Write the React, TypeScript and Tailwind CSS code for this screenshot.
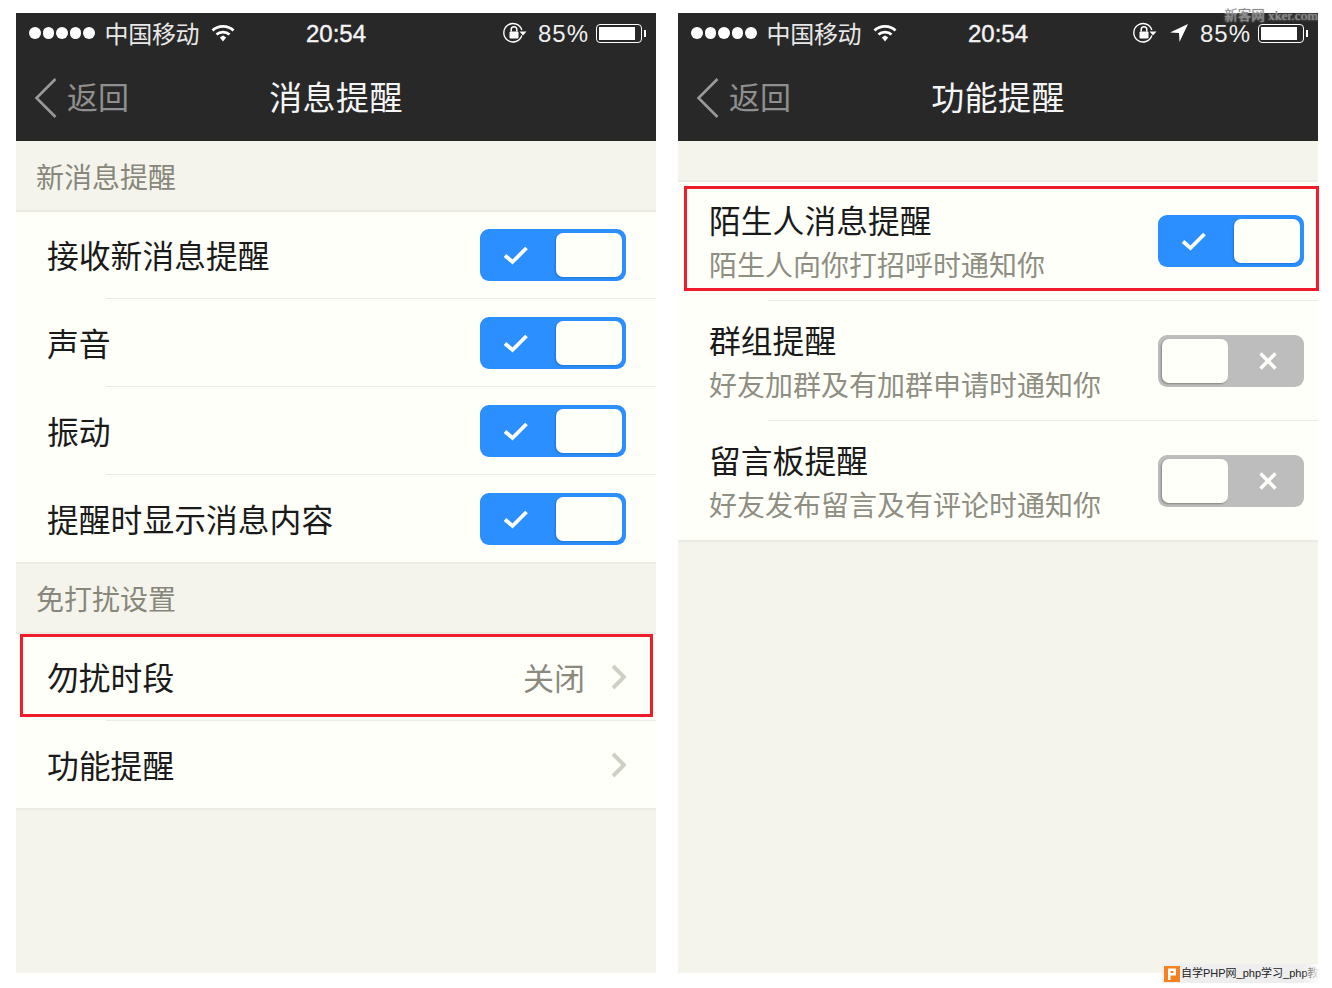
import { ReactNode } from 'react';

const cjk = "font-['Liberation_Sans','Noto_Sans_CJK_SC',sans-serif]";

function Toggle({ on }: { on: boolean }) {
  if (on) {
    return (
      <div className="flex h-[52px] w-[146px] shrink-0 items-center justify-end rounded-[9px] bg-[#2b8fff] pr-1">
        <div className="relative h-[44px] w-[66px] rounded-[7px] bg-[#fffffa] shadow-[-1px_1px_2px_rgba(0,40,100,0.25)]">
          <svg className="absolute left-[-53px] top-[11px]" width="26" height="22" viewBox="0 0 26 22" fill="none">
            <path d="M2 11.5 L9.5 18 L23.5 4" stroke="#fffffa" strokeWidth="3.8" />
          </svg>
        </div>
      </div>
    );
  }
  return (
    <div className="flex h-[52px] w-[146px] shrink-0 items-center rounded-[9px] bg-[#bdbdbd] pl-1">
      <div className="relative h-[44px] w-[66px] rounded-[7px] bg-[#fffffa] shadow-[-1px_1px_2px_rgba(0,0,0,0.3)]">
        <svg className="absolute left-[97px] top-[13px]" width="18" height="18" viewBox="0 0 18 18" fill="none">
          <path d="M1.5 1.5 L16.5 16.5 M16.5 1.5 L1.5 16.5" stroke="#fffffa" strokeWidth="3.4" />
        </svg>
      </div>
    </div>
  );
}

function Chevron() {
  return (
    <svg width="16" height="26" viewBox="0 0 16 26" fill="none">
      <path d="M3 2 L14 13 L3 24" stroke="#cfcfc6" strokeWidth="4" />
    </svg>
  );
}

function Wifi() {
  return (
    <svg width="24" height="20" viewBox="0 0 24 20" fill="none">
      <path d="M1.5 7.5 C7 2 17 2 22.5 7.5" stroke="#fff" strokeWidth="2.8" />
      <path d="M5.5 11.5 C9 8.2 15 8.2 18.5 11.5" stroke="#fff" strokeWidth="2.8" />
      <path d="M8.8 14.6 L12 12.6 L15.2 14.6 L12 18.6 Z" fill="#fff" />
    </svg>
  );
}

function RotationLock() {
  return (
    <svg width="24" height="22" viewBox="0 0 24 22" fill="none">
      <path d="M18.8 13.5 A9.2 9.2 0 1 1 18.8 8" stroke="#fff" strokeWidth="1.4" />
      <path d="M16.5 9.5 H23.5 L20 13.5 Z" fill="#fff" />
      <rect x="6.5" y="9.5" width="9" height="7" rx="1" fill="#fff" />
      <path d="M8.2 9.5 V7.5 A2.8 2.8 0 0 1 13.8 7.5 V9.5" stroke="#fff" strokeWidth="1.5" />
    </svg>
  );
}

function Battery() {
  return (
    <div className="flex items-center">
      <div className="h-[19px] w-[46px] rounded-[4px] border border-white p-[2px]">
        <div className="h-full w-[36px] bg-white" />
      </div>
      <div className="ml-[2px] h-[7px] w-[2px] bg-white" />
    </div>
  );
}

function Header({ title, locate }: { title: string; locate?: boolean }) {
  return (
    <div className="bg-[#282828] text-white">
      <div className="relative flex h-[40px] items-center pl-[13px] pr-[10px]">
        <div className="flex gap-[2px]">
          {[0, 1, 2, 3, 4].map((i) => (
            <div key={i} className="size-[11.5px] rounded-full bg-white" />
          ))}
        </div>
        <span className="ml-[10px] pt-[4px] text-[24px] leading-none tracking-[-0.3px] text-[#e8e8e8]">中国移动</span>
        <div className="ml-[12px]">
          <Wifi />
        </div>
        <span className="absolute left-[290px] top-[9px] text-[24px] leading-none text-[#f4f4f4] [-webkit-text-stroke:0.4px_#f4f4f4]">20:54</span>
        <div className="ml-auto flex items-center">
          <RotationLock />
          {locate && (
            <svg className="ml-[12px]" width="20" height="20" viewBox="0 0 20 20">
              <path d="M19 1 L1 9.5 L10 10 L10.5 19 Z" fill="#fff" />
            </svg>
          )}
          <span className="ml-[11px] pt-[2px] text-[24px] leading-none tracking-[1px] text-[#f0f0f0]">85%</span>
          <div className="ml-[7px]">
            <Battery />
          </div>
        </div>
      </div>
      <div className="relative flex h-[88px] items-center justify-center">
        <div className="absolute left-[18px] top-[24px] flex items-center">
          <svg width="24" height="42" viewBox="0 0 24 42" fill="none">
            <path d="M21.5 2 L2.5 21 L21.5 40" stroke="#9a9a9a" strokeWidth="2.6" />
          </svg>
          <span className="ml-[9px] text-[31px] leading-none text-[#8f8f8f]">返回</span>
        </div>
        <span className="pt-[2px] text-[33px] leading-none tracking-[0.4px] text-[#f5f5f5]">{title}</span>
      </div>
    </div>
  );
}

// section and list-end rules sit across the block boundary, one px lower than the box
function EndLine() {
  return <div className="absolute -bottom-px left-0 right-0 z-10 h-[2px] bg-[#ebebe4]" />;
}

function SectionLabel({ children }: { children: ReactNode }) {
  return (
    <div className="relative flex h-[70px] items-center pl-[20px] pt-[6px] text-[28px] leading-none text-[#87877b]">
      {children}
      <EndLine />
    </div>
  );
}

function Row({ label, last, children }: { label: string; last?: boolean; children: ReactNode }) {
  return (
    <div className="relative flex h-[88px] items-center justify-between bg-[#fffffa] pl-[31px] pr-[30px]">
      <span className="pt-[5px] text-[31.8px] leading-none text-[#1a1a1a]">{label}</span>
      {children}
      {last ? <EndLine /> : <div className="absolute bottom-0 left-[90px] right-0 h-[1px] bg-[#ebebe4]" />}
    </div>
  );
}

function DetailRow({ title, desc, on, last }: { title: string; desc: string; on: boolean; last?: boolean }) {
  return (
    <div className="relative flex h-[120px] items-center justify-between bg-[#fffffa] pl-[31px] pr-[14px]">
      <div className="flex flex-col gap-[14px] pt-[6px]">
        <span className="text-[31.8px] leading-none text-[#1a1a1a]">{title}</span>
        <span className="text-[28px] leading-none text-[#8e8e83]">{desc}</span>
      </div>
      <Toggle on={on} />
      {last ? <EndLine /> : <div className="absolute bottom-0 left-[90px] right-0 h-[1px] bg-[#ebebe4]" />}
    </div>
  );
}

function Phone({ children }: { children: ReactNode }) {
  return <div className="relative flex h-[960px] w-[640px] shrink-0 flex-col bg-[#f4f4ec]">{children}</div>;
}

export default function App() {
  return (
    <div className={`relative h-[988px] w-[1332px] overflow-hidden bg-white ${cjk}`}>
      <div className="flex gap-[22px] pl-[16px] pt-[13px]">
        <Phone>
          <Header title="消息提醒" />
          <SectionLabel>新消息提醒</SectionLabel>
          <Row label="接收新消息提醒"><Toggle on /></Row>
          <Row label="声音"><Toggle on /></Row>
          <Row label="振动"><Toggle on /></Row>
          <Row label="提醒时显示消息内容" last><Toggle on /></Row>
          <SectionLabel>免打扰设置</SectionLabel>
          <Row label="勿扰时段">
            <div className="flex items-center gap-[25px]">
              <span className="pt-[5px] text-[31px] leading-none text-[#8a8a7e]">关闭</span>
              <Chevron />
            </div>
          </Row>
          <Row label="功能提醒" last><Chevron /></Row>
          <div className="pointer-events-none absolute left-[4px] top-[621px] z-20 h-[83px] w-[633px] border-[3px] border-[#f01c2c]" />
        </Phone>
        <Phone>
          <Header title="功能提醒" locate />
          <div className="relative h-[40px]">
            <EndLine />
          </div>
          <DetailRow title="陌生人消息提醒" desc="陌生人向你打招呼时通知你" on />
          <DetailRow title="群组提醒" desc="好友加群及有加群申请时通知你" on={false} />
          <DetailRow title="留言板提醒" desc="好友发布留言及有评论时通知你" on={false} last />
          <div className="pointer-events-none absolute left-[6px] top-[173px] z-20 h-[105px] w-[635px] border-[3px] border-[#f01c2c]" />
        </Phone>
      </div>
      <div className="absolute right-[14px] top-[9px] z-30 font-['Liberation_Serif','Noto_Sans_CJK_SC',serif] text-[13.5px] leading-[14px] text-[#8a8a8a] [text-shadow:0_0_2px_#cfcfcf]">
        新客网 xker.com
      </div>
      <div className="absolute left-[1162px] top-[964px] z-30 flex h-[19px] w-[170px] items-center bg-[#eeeeee] pl-[2px] text-[11px] leading-none text-[#222]">
        <svg width="16" height="16" viewBox="0 0 16 16" className="shrink-0">
          <rect width="16" height="16" fill="#f58220" />
          <path d="M4 2.5 H12 V9.5 H6.5 V14 H4 Z M6.5 5 V7 H9.5 V5 Z" fill="#fff" fillRule="evenodd" />
        </svg>
        <span className="ml-[1px] whitespace-nowrap">自学PHP网_php学习_php教程</span>
        <div className="absolute bottom-0 right-0 top-0 w-[30px] bg-gradient-to-r from-transparent to-white to-60%" />
      </div>
    </div>
  );
}
